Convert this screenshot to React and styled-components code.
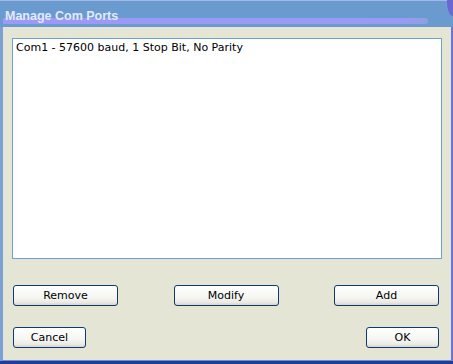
import styled, { createGlobalStyle } from 'styled-components'

const GlobalStyle = createGlobalStyle`
  html, body {
    margin: 0;
    padding: 0;
    background: #e5e5d5;
  }
`

const Window = styled.div`
  width: 453px;
  height: 364px;
  display: flex;
  flex-direction: column;
  box-sizing: border-box;
  font-family: "DejaVu Sans", Tahoma, sans-serif;
  overflow: hidden;
`

const TitleBar = styled.div`
  position: relative;
  height: 27px;
  flex: none;
  box-sizing: border-box;
  background: #6a9bce;
  border-top: 1px solid #a9b6ea;
  padding: 4px 0 0 5px;

  &::after {
    content: '';
    position: absolute;
    left: 3px;
    width: 425px;
    top: 17px;
    height: 6px;
    border-radius: 0 3px 3px 0;
    background: linear-gradient(90deg, #9b9af6 0%, #9a9af6 93%, #8fa0e0 100%);
  }
`

const Title = styled.span`
  position: relative;
  z-index: 1;
  font-family: "Liberation Sans", Arial, sans-serif;
  font-weight: bold;
  font-size: 12.5px;
  color: #e3e9fb;
`

const Corner = styled.span`
  position: absolute;
  right: 0;
  top: -1px;
  width: 6px;
  height: 16px;
  background: #6a66d2;
  border-bottom-left-radius: 6px 14px;
`

const Body = styled.div`
  flex: 1;
  background: #e5e5d5;
  border-left: 3px solid #7ba0d3;
  border-right: 2px solid #6d72d8;
  border-bottom: 1px solid #6d8fd0;
  box-shadow: 0 3px 0 #1f3b9c;
  margin-bottom: 3px;
  padding: 11px 0 0 9px;
  display: flex;
  flex-direction: column;
`

const ListBox = styled.div`
  width: 430px;
  height: 221px;
  box-sizing: border-box;
  background: #ffffff;
  border: 1px solid #6f9fd8;
  padding: 2px 3px;
`

const ListItem = styled.div`
  font-size: 11px;
  line-height: 13px;
  color: #000;
`

const ButtonRow = styled.div`
  width: 426px;
  margin-left: 1px;
  margin-top: ${p => p.$top}px;
  display: flex;
  justify-content: space-between;
`

const Button = styled.button`
  width: ${p => p.$w}px;
  height: 21px;
  box-sizing: border-box;
  border: 1px solid #0b3b72;
  border-radius: 3px;
  background: linear-gradient(180deg, #ffffff 0%, #f5f5f2 60%, #ecebe5 85%, #d8d4ca 100%);
  font-family: "DejaVu Sans", Tahoma, sans-serif;
  font-size: 11px;
  color: #000;
  padding: 0;
  cursor: pointer;
`

const App = () => {
  return <>
    <GlobalStyle />
    <Window>
      <TitleBar>
        <Title>Manage Com Ports</Title>
        <Corner />
      </TitleBar>
      <Body>
        <ListBox>
          <ListItem>Com1 - 57600 baud, 1 Stop Bit, No Parity</ListItem>
        </ListBox>
        <ButtonRow $top={26}>
          <Button $w={105}>Remove</Button>
          <Button $w={105}>Modify</Button>
          <Button $w={105}>Add</Button>
        </ButtonRow>
        <ButtonRow $top={21}>
          <Button $w={73}>Cancel</Button>
          <Button $w={73}>OK</Button>
        </ButtonRow>
      </Body>
    </Window>
  </>
}

export default App
